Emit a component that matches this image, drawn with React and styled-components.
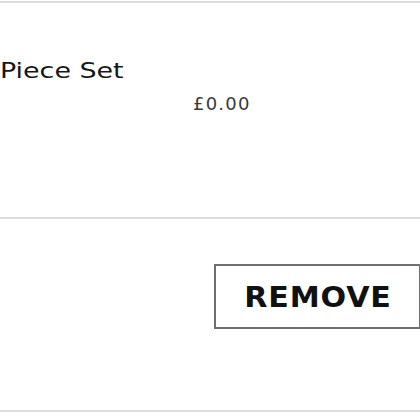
import styled, { createGlobalStyle } from "styled-components";

const GlobalStyle = createGlobalStyle`
    html, body {
        margin: 0;
        padding: 0;
        background: #fff;
    }
    body {
        font-family: "DejaVu Sans", "Liberation Sans", sans-serif;
        color: #1a1a1a;
    }
`

export default function App(){
    return(
        <>
            <GlobalStyle/>
            <CartItem>
                <ItemInfo>
                    <ItemName><Wide scale={1.28}>Piece Set</Wide></ItemName>
                    <ItemPrice>£0.00</ItemPrice>
                </ItemInfo>
                <ItemActions>
                    <RemoveBtn type="button"><Wide scale={1.04}>REMOVE</Wide></RemoveBtn>
                </ItemActions>
            </CartItem>
        </>
    )
}

const CartItem = styled.div`
    width: 420px;
    margin-top: 1px;
    border-top: 2px solid #dcdcdc;
    border-bottom: 2px solid #dcdcdc;
    overflow: hidden;
`
const ItemInfo = styled.div`
    height: 216px;
    padding-top: 56px;
    box-sizing: border-box;
    border-bottom: 2px solid #dcdcdc;
`
const Wide = styled.span`
    display: inline-block;
    transform: scaleX(${props=>props.scale});
    transform-origin: ${props=>props.scale>1.1?"left":"center"};
`
const ItemName = styled.div`
    font-size: 21px;
    line-height: 24px;
    color: #161616;
`
const ItemPrice = styled.div`
    padding-left: 193px;
    margin-top: 11px;
    font-size: 18px;
    line-height: 20px;
    letter-spacing: 1.2px;
    color: #3a3a3a;
`
const ItemActions = styled.div`
    display: flex;
    justify-content: flex-end;
    padding: 45px 0 81px 0;
`
const RemoveBtn = styled.button`
    width: 207px;
    height: 65px;
    margin-right: -1px;
    background: #fff;
    border: 2px solid #707070;
    font-family: "DejaVu Sans", "Liberation Sans", sans-serif;
    font-weight: 700;
    font-size: 29px;
    letter-spacing: 0.8px;
    color: #111;
    padding: 0;
`
